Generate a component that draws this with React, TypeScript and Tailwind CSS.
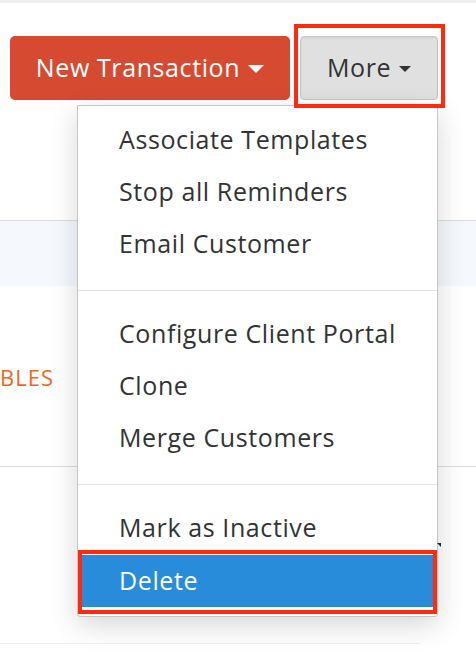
import React from 'react';

const font = { fontFamily: '"Open Sans", Lato, sans-serif' };

const sections: string[][] = [
    ['Associate Templates', 'Stop all Reminders', 'Email Customer'],
    ['Configure Client Portal', 'Clone', 'Merge Customers'],
];

const Caret = ({ className }: { className: string }) => (
    <span className={`inline-block border-x-transparent border-b-0 ${className}`} />
);

const MenuItem = ({ label }: { label: string }) => (
    <div className="h-[52px] flex items-center pl-[41px] text-[25px] tracking-[0.6px] text-[#333] cursor-pointer">{label}</div>
);

const App: React.FC = () => {
    return (
        <div className="relative w-[476px] h-[662px] bg-white overflow-hidden" style={font}>
            <div className="h-[3px] bg-[#efefef]" />

            {/* toolbar */}
            <div className="flex gap-[10px] pl-[10px] pt-[33px]">
                <button className="w-[280px] h-[64px] rounded-[5px] bg-[#d64a32] text-white text-[25px] tracking-[0.6px] flex items-center justify-center gap-[8px]">
                    New Transaction
                    <Caret className="border-x-[8px] border-t-[8px] border-t-white mt-[2px]" />
                </button>
                <button className="w-[138px] h-[64px] rounded-[4px] bg-[#e0e0e0] border border-[#c6c6c6] text-[#333] text-[25px] tracking-[0.6px] flex items-center justify-center gap-[8px] shadow-[inset_0_1px_2px_rgba(0,0,0,0.08)]">
                    More
                    <Caret className="border-x-[6px] border-t-[6px] border-t-[#333] mt-[2px]" />
                </button>
            </div>

            {/* page content behind the menu */}
            <div className="mt-[120px] border-t border-[#dcdcdc] h-[66px] bg-[#f5f8fd]" />
            <div className="h-[181px] flex items-center border-b border-[#dcdcdc]">
                <span className="text-[22px] tracking-[1px] text-[#f0661f] mt-[3px]">BLES</span>
            </div>
            <div className="mt-[176px] w-[420px] border-t border-[#efefef]" />

            {/* highlight around More */}
            <div className="absolute left-[294px] top-[24px] w-[151px] h-[84px] border-4 border-[#ff2a10] z-20" />

            {/* dropdown menu */}
            <div className="absolute left-[77px] top-[105px] w-[361px] bg-white border border-[#c6c6c6] rounded-b-[3px] shadow-[0_8px_28px_rgba(0,0,0,0.16)] z-10">
                <div className="pt-[8px] pb-[20px] border-b border-[#e2e2e2]">
                    {sections[0].map(s => <MenuItem key={s} label={s} />)}
                </div>
                <div className="pt-[17px] pb-[20px] border-b border-[#e2e2e2]">
                    {sections[1].map(s => <MenuItem key={s} label={s} />)}
                </div>
                <div className="pt-[17px] pb-[2px]">
                    <MenuItem label="Mark as Inactive" />
                    <div className="relative -mt-[4px] border-4 border-[#ff2a10] pt-[1px] pb-[3px] bg-white">
                        <div className="h-[52px] flex items-center pl-[37px] text-[25px] tracking-[0.6px] text-white bg-[#288cdb]">Delete</div>
                    </div>
                </div>
                <span className="absolute -right-[4px] top-[437px] border-l-[4px] border-l-transparent border-t-[4px] border-t-[#222]" />
            </div>
        </div>
    );
};

export default App;
